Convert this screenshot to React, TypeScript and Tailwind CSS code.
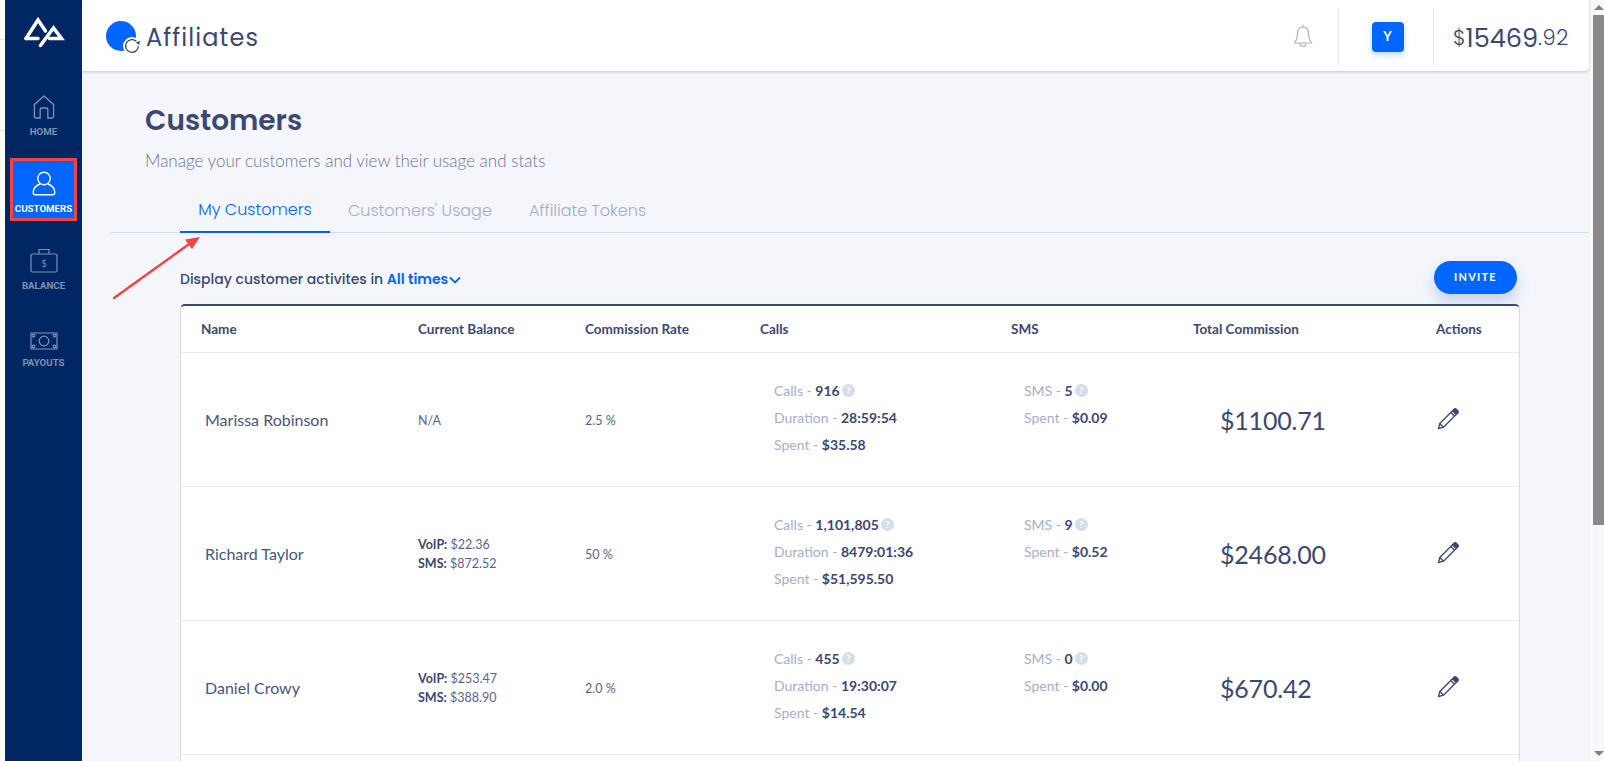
import { ReactNode } from 'react';

const poppins = "font-['Poppins','Inter','Noto_Sans',sans-serif]";

function Logo() {
  return (
    <svg width="42" height="32" viewBox="0 0 42 32" fill="none" stroke="white" strokeWidth="3.5" strokeLinejoin="miter" strokeLinecap="round">
      <path d="M3 22.5 L15 4 L22.5 15" />
      <path d="M3 22.5 H15" />
      <path d="M17.5 29.5 L30.5 12 L38.5 22.5 H26.5" />
    </svg>
  );
}

function NavItem({ label, active, icon }: { label: string; active?: boolean; icon: ReactNode }) {
  return (
    <div
      className={
        active
          ? 'mx-[5px] h-[63px] flex flex-col items-center bg-[#0066ff] border-[3px] border-[#f44343] text-white'
          : 'mx-[5px] h-[63px] flex flex-col items-center border-[3px] border-transparent text-[#7f92b3]'
      }
    >
      <div className="h-[35px] flex items-end justify-center">{icon}</div>
      <span className="mt-[6px] text-[9.7px] leading-[13px] font-bold font-['Roboto',sans-serif] whitespace-nowrap">{label}</span>
    </div>
  );
}

function Sidebar() {
  return (
    <aside className="w-[77px] shrink-0 bg-[#002663] flex flex-col items-stretch">
      <div className="h-[64px] flex items-center justify-center">
        <Logo />
      </div>
      <div className="flex flex-col gap-[14px] mt-[17px]">
        <NavItem
          label="HOME"
          icon={
            <svg width="22" height="24" viewBox="1 0.5 22 25" fill="none" stroke="currentColor" strokeWidth="1.4">
              <path d="M2 10.5 L12 1.5 L22 10.5 V23 a1.5 1.5 0 0 1 -1.5 1.5 H16 V15.5 a1.5 1.5 0 0 0 -1.5 -1.5 H9.5 A1.5 1.5 0 0 0 8 15.5 V24.5 H3.5 A1.5 1.5 0 0 1 2 23 Z" />
            </svg>
          }
        />
        <NavItem
          label="CUSTOMERS"
          active
          icon={
            <svg width="24" height="25" viewBox="0 0 24 25" fill="none" stroke="currentColor" strokeWidth="1.4">
              <circle cx="12" cy="7.5" r="6.2" />
              <path d="M8 13 C4 14.5 1.2 18 1.2 21.5 C1.2 23 2 23.8 3.5 23.8 H20.5 C22 23.8 22.8 23 22.8 21.5 C22.8 18 20 14.5 16 13" />
            </svg>
          }
        />
        <NavItem
          label="BALANCE"
          icon={
            <svg width="28" height="25" viewBox="0 0 28 25" fill="none" stroke="currentColor" strokeWidth="1.2">
              <rect x="1" y="6" width="26" height="18" rx="1.5" />
              <path d="M9 6 V1.5 H19 V6" />
              <text x="14" y="19" textAnchor="middle" fontSize="9" fill="currentColor" stroke="none">$</text>
            </svg>
          }
        />
        <NavItem
          label="PAYOUTS"
          icon={
            <svg width="28" height="18" viewBox="0 0 28 18" fill="none" stroke="currentColor" strokeWidth="1.2">
              <path d="M5 1 H23 M27 5 V13 M23 17 H5 M1 13 V5" />
              <path d="M1 5 V1 H5 M23 1 H27 V5 M27 13 V17 H23 M5 17 H1 V13" />
              <circle cx="3.5" cy="3.5" r="1.4" />
              <circle cx="24.5" cy="3.5" r="1.4" />
              <circle cx="24.5" cy="14.5" r="1.4" />
              <circle cx="3.5" cy="14.5" r="1.4" />
              <circle cx="14" cy="9" r="4.8" />
            </svg>
          }
        />
      </div>
    </aside>
  );
}

function Header() {
  return (
    <header className="h-[71px] mr-[1px] pt-[3px] bg-white rounded-br-[4px] shadow-[0_1px_3px_rgba(60,72,110,0.3)] flex items-center shrink-0">
      <div className="pl-[24px] flex items-center flex-1">
        <div className="relative -mt-[3px] w-[30px] h-[30px] rounded-full bg-[#0066ff]">
          <div className="absolute z-10 left-[17px] top-[16px] w-[18px] h-[18px] rounded-full bg-white flex items-center justify-center">
            <svg width="16" height="16" viewBox="0 0 16 16" fill="none" stroke="#3c4872" strokeWidth="1.3" className="shrink-0">
              <path d="M14.4 8.2 A6.4 6.4 0 1 1 12.4 3.3" />
              <path d="M11.8 4.6 L15.8 3 L15.2 7 Z" fill="#3c4872" stroke="none" />
            </svg>
          </div>
        </div>
        <span className={`${poppins} ml-[10px] pt-[2px] text-[24px] leading-[30px] text-[#3c4872] tracking-[1.1px]`}>Affiliates</span>
      </div>
      <svg width="20" height="26" viewBox="0 0 20 26" fill="none" stroke="#a9b3cb" strokeWidth="1.2" className="mr-[25px] -mt-[3px]">
        <path d="M10 1.5 V4 M10 4 C5.5 4 4.5 8 4.5 11 C4.5 16 3 18 1.5 20 H18.5 C17 18 15.5 16 15.5 11 C15.5 8 14.5 4 10 4 Z" />
        <path d="M7 20.5 A3 3 0 0 0 13 20.5" />
      </svg>
      <div className="h-[58px] border-l border-[#e4e6ec] w-[95px] pl-[3px] flex items-center justify-center">
        <div className="w-[32px] h-[30px] rounded-[4px] bg-[#0066ff] text-white text-[13px] font-bold flex items-center justify-center shadow-[0_3px_6px_rgba(0,102,255,0.25)]">
          Y
        </div>
      </div>
      <div className={`${poppins} h-[58px] pt-[2px] border-l border-[#e4e6ec] w-[156px] pl-[19px] flex items-center text-[#3c4872] whitespace-nowrap`}>
        <span className="text-[21px] font-light">$</span>
        <span className="text-[25.5px]">15469</span>
        <span className="text-[21px] font-light tracking-[0.6px]">.92</span>
      </div>
    </header>
  );
}

function Tabs() {
  return (
    <div className={`${poppins} ml-[28px] h-[45px] border-b border-[#d3dcec] pl-[70px] flex items-stretch text-[16px] font-light`}>
      <div className="w-[150px] border-b-[2px] -mb-[1px] border-[#0066ff] text-[#0066ff] flex items-center justify-center whitespace-nowrap">
        My Customers
      </div>
      <div className="ml-[18px] pt-[2px] flex items-center text-[#a3adc6] whitespace-nowrap">Customers' Usage</div>
      <div className="ml-[37px] pt-[2px] flex items-center text-[#a3adc6] whitespace-nowrap">Affiliate Tokens</div>
    </div>
  );
}

function Help() {
  return (
    <span className="inline-flex ml-[2px] w-[13px] h-[13px] rounded-full bg-[#d5dcea] text-white text-[10px] font-bold items-center justify-center align-[2px] leading-none">
      ?
    </span>
  );
}

function Stat({ label, value, help }: { label: string; value: string; help?: boolean }) {
  return (
    <div className="h-[27px] leading-[27px] whitespace-nowrap">
      <span className="text-[#a3afc9]">{label} - </span>
      <span className="font-bold text-[#3c4872]">{value}</span>
      {help && <Help />}
    </div>
  );
}

const gridCols = 'grid grid-cols-[237px_167px_175px_251px_182px_243px_1fr]';

type Row = {
  name: string;
  voip?: string;
  sms?: string;
  rate: string;
  calls: string;
  duration: string;
  spent: string;
  smsCount: string;
  smsSpent: string;
  total: string;
};

const rows: Row[] = [
  { name: 'Marissa Robinson', rate: '2.5 %', calls: '916', duration: '28:59:54', spent: '$35.58', smsCount: '5', smsSpent: '$0.09', total: '$1100.71' },
  { name: 'Richard Taylor', voip: '$22.36', sms: '$872.52', rate: '50 %', calls: '1,101,805', duration: '8479:01:36', spent: '$51,595.50', smsCount: '9', smsSpent: '$0.52', total: '$2468.00' },
  { name: 'Daniel Crowy', voip: '$253.47', sms: '$388.90', rate: '2.0 %', calls: '455', duration: '19:30:07', spent: '$14.54', smsCount: '0', smsSpent: '$0.00', total: '$670.42' },
];

function CustomerRow({ row }: { row: Row }) {
  return (
    <div className={`${gridCols} h-[134px] border-b border-[#e8eaf0] items-center text-[#3c4872]`}>
      <div className="pl-[24px] text-[16px] text-[#4a5579]">{row.name}</div>
      <div className={`text-[12.5px] leading-[19px] text-[#5a648a] ${row.voip ? '' : 'pt-[1px]'}`}>
        {row.voip ? (
          <>
            <div><b className="text-[#3c4872]">VoIP:</b> {row.voip}</div>
            <div><b className="text-[#3c4872]">SMS:</b> {row.sms}</div>
          </>
        ) : (
          'N/A'
        )}
      </div>
      <div className="pt-[3px] text-[12.5px] text-[#5a648a]">{row.rate}</div>
      <div className="pl-[14px] pb-[4px] text-[14px]">
        <Stat label="Calls" value={row.calls} help />
        <Stat label="Duration" value={row.duration} />
        <Stat label="Spent" value={row.spent} />
      </div>
      <div className="pl-[13px] text-[14px] self-start pt-[24px]">
        <Stat label="SMS" value={row.smsCount} help />
        <Stat label="Spent" value={row.smsSpent} />
      </div>
      <div className="pl-[27px] pt-[3px] text-[25px] tracking-[-0.2px] text-[#3c4872] whitespace-nowrap">{row.total}</div>
      <div className="pl-[1px] pb-[1px]">
        <svg width="22" height="22" viewBox="0 0 22 22" fill="none" stroke="#3c4872" strokeWidth="1.3" strokeLinejoin="round">
          <path d="M1.5 20.5 L2.8 15.5 L15.5 2.8 L19.2 6.5 L6.5 19.2 Z" />
          <path d="M13.8 4.5 L17.5 8.2 M2.8 15.5 L6.5 19.2" />
          <path d="M16 2.2 L17 1.2 A1.6 1.6 0 0 1 19.3 1.2 L20.8 2.7 A1.6 1.6 0 0 1 20.8 5 L19.8 6 Z" fill="#3c4872" />
        </svg>
      </div>
    </div>
  );
}

function CustomerTable() {
  return (
    <div className="ml-[98px] mr-[70px] mt-[10px] bg-white border border-[#d3dcec] border-t-[2px] border-t-[#3c4872] rounded-t-[5px]">
      <div className={`${gridCols} h-[47px] border-b border-[#e8eaf0] items-center text-[13.5px] font-bold text-[#3c4872]`}>
        <div className="pl-[20px]">Name</div>
        <div>Current Balance</div>
        <div>Commission Rate</div>
        <div>Calls</div>
        <div>SMS</div>
        <div>Total Commission</div>
        <div>Actions</div>
      </div>
      {rows.map((r) => (
        <CustomerRow key={r.name} row={r} />
      ))}
      <div className="h-[40px]" />
    </div>
  );
}

function Arrow() {
  return (
    <svg className="absolute left-[30px] top-[235px]" width="90" height="66" viewBox="0 0 90 66" fill="none">
      <path d="M2 63 L80 7" stroke="#f44343" strokeWidth="2.4" strokeLinecap="round" />
      <path d="M88 2 L73 4.5 L80 14 Z" fill="#f44343" />
    </svg>
  );
}

export default function App() {
  return (
    <div className="h-screen w-full overflow-hidden flex bg-white font-['Lato','Noto_Sans',sans-serif]">
      <div className="w-[5px] shrink-0 relative">
        <div className="absolute top-[39px] left-0 w-full h-px bg-[#e4e4e4]" />
        <div className="absolute top-[130px] left-0 w-full h-px bg-[#e4e4e4]" />
      </div>
      <Sidebar />
      <main className="relative flex-1 min-w-0 bg-[#f4f6fb] flex flex-col">
        <Header />
        <h1 className={`${poppins} ml-[63px] mt-[31px] text-[28px] leading-[38px] font-semibold text-[#3c4872]`}>Customers</h1>
        <p className="ml-[63px] mt-[9px] text-[17px] leading-[24px] font-light text-[#6b7694]">
          Manage your customers and view their usage and stats
        </p>
        <div className="mt-[15px]">
          <Tabs />
        </div>
        <div className="mt-[28px] ml-[98px] mr-[73px] flex items-center justify-between h-[34px]">
          <div className={`${poppins} pt-[4px] text-[14px] font-medium text-[#3c4872] flex items-center`}>
            Display customer activites in&nbsp;<span className="text-[#0066ff] font-semibold">All times</span>
            <svg width="12" height="8" viewBox="0 0 12 8" fill="none" stroke="#0066ff" strokeWidth="1.8" className="ml-[1px]">
              <path d="M1 1.5 L6 6.5 L11 1.5" />
            </svg>
          </div>
          <button className="w-[83px] h-[33px] rounded-full bg-[#0066ff] text-white text-[11px] font-bold tracking-[1.2px] shadow-[0_8px_16px_rgba(0,60,170,0.2)]">
            INVITE
          </button>
        </div>
        <CustomerTable />
        <Arrow />
      </main>
      <div className="w-[3px] shrink-0 bg-[#fafafa]" />
      <div className="w-[11px] shrink-0 bg-[#f8f8f8] flex flex-col items-center">
        <div className="h-[15px] flex items-center">
          <div className="w-0 h-0 border-x-[5px] border-x-transparent border-b-[5px] border-b-[#808080]" />
        </div>
        <div className="w-full h-[510px] bg-[#8a8a8a]" />
        <div className="flex-1" />
        <div className="h-[15px] flex items-center">
          <div className="w-0 h-0 border-x-[5px] border-x-transparent border-t-[5px] border-t-[#808080]" />
        </div>
      </div>
    </div>
  );
}
